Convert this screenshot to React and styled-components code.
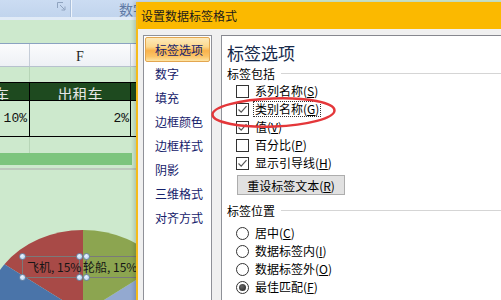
import React from "react";
import styled, { createGlobalStyle } from "styled-components";

const GlobalStyle = createGlobalStyle`
  html, body { margin: 0; padding: 0; }
  body { background: #cde9cd; }
  #root { width: 501px; height: 300px; }
`;

const CJK = `"Noto Sans CJK SC", "Noto Sans", sans-serif`;

const Screen = styled.div`
  position: relative;
  width: 501px;
  height: 300px;
  overflow: hidden;
  background: #cde9cd;
  font-family: ${CJK};
`;

/* ---------- Spreadsheet behind the dialog ---------- */
const Sheet = styled.div`
  display: flex;
  flex-direction: column;
  width: 150px;
  height: 300px;
`;

const Ribbon = styled.div`
  display: flex;
  align-items: flex-start;
  height: 17px;
  padding-left: 57px;
  background: linear-gradient(#cbdcf2, #c1d4ed);
  border-bottom: 3px solid #e1ebf7;
`;

const Launcher = styled.svg`
  flex: none;
  margin-top: 2px;
`;

const RibbonDivider = styled.div`
  flex: none;
  width: 1px;
  height: 17px;
  margin-left: 4px;
  background: #aabfdb;
  border-right: 1px solid #eef4fb;
`;

const RibbonGroup = styled.div`
  margin-left: 47px;
  font-size: 14px;
  line-height: 19px;
  color: #5f7aa5;
  white-space: nowrap;
`;

const Band = styled.div`
  height: 23px;
  background: #cde9cd;
  border-bottom: 1px solid #8ba2c1;
`;

const HeaderRow = styled.div`
  display: grid;
  grid-template-columns: 30px 101px 1fr;
  height: 22px;
  background: linear-gradient(#fbfcfd, #eef1f5);
  border-bottom: 1px solid #b7c1ce;
`;

const HeaderCell = styled.div`
  display: flex;
  align-items: center;
  justify-content: center;
  padding-top: 3px;
  border-right: 1px solid #c5cdd8;
  font-family: "Liberation Serif", serif;
  font-size: 14px;
  color: #1e1e1e;
`;

const GridRow = styled.div`
  display: grid;
  grid-template-columns: 30px 101px 1fr;
  height: ${(p) => p.h}px;
  background: ${(p) => p.bg};
  border-top: ${(p) => (p.ruled ? "1px solid #000" : "none")};
  border-bottom: ${(p) => (p.closed ? "1px solid #000" : "none")};
`;

const GridCell = styled.div`
  display: flex;
  align-items: ${(p) => (p.pt ? "flex-start" : "center")};
  justify-content: ${(p) => p.align || "center"};
  overflow: hidden;
  padding-top: ${(p) => p.pt || 0}px;
  padding-right: ${(p) => p.pr || 0}px;
  border-right: 1px solid ${(p) => p.line};
  color: ${(p) => p.color || "#111"};
  font-family: ${(p) => (p.mono ? `"Liberation Mono", monospace` : CJK)};
  font-size: ${(p) => p.size || 15}px;
  line-height: ${(p) => (p.pt ? "15px" : "normal")};
  white-space: nowrap;
`;

const Clipped = styled.span`
  margin-left: -6px;
`;

const GreenBar = styled.div`
  width: 132px;
  height: 12px;
  background: #7cc57d;
`;

const SheetRule = styled.div`
  height: 2px;
  margin-top: 3px;
  background: #bcc9bc;
`;

const Chart = styled.div`
  position: relative;
  flex: 1;
  background: #cde9cd;
`;

const PieSvg = styled.svg`
  display: block;
`;

const DataLabel = styled.div`
  position: absolute;
  left: ${(p) => p.x}px;
  top: 86px;
  width: ${(p) => p.w}px;
  height: 22px;
  box-sizing: border-box;
  border: 1px solid #7a7a7a;
  font-size: 12px;
  line-height: 19px;
  color: #151515;
  text-indent: ${(p) => p.indent}px;
  white-space: nowrap;
`;

const Handle = styled.div`
  position: absolute;
  left: ${(p) => p.x - 3.5}px;
  top: ${(p) => p.y - 3.5}px;
  width: 7px;
  height: 7px;
  box-sizing: border-box;
  border-radius: 50%;
  border: 1px solid #6b87a8;
  background: radial-gradient(circle at 40% 35%, #eef6ff, #a9c8e8);
`;

/* ---------- Dialog ---------- */
const Dialog = styled.div`
  position: absolute;
  left: 136px;
  top: 2px;
  width: 380px;
  height: 320px;
  display: flex;
  flex-direction: column;
  background: #f0f0f0;
  border-left: 2px solid #f5bb1a;
  box-shadow: -2px 0 4px rgba(0, 0, 0, 0.16);
`;

const TitleBar = styled.div`
  height: 27px;
  line-height: 27px;
  padding-left: 3px;
  background: #fbb900;
  font-size: 12px;
  color: #1b1b1b;
  white-space: nowrap;
`;

const DialogBody = styled.div`
  flex: 1;
  display: flex;
  gap: 9px;
  padding: 6px 0 0 5px;
`;

const Nav = styled.div`
  flex: none;
  width: 69px;
  box-sizing: border-box;
  display: flex;
  flex-direction: column;
  padding-top: 1px;
  background: #fff;
  border: 1px solid #8f9198;
  border-bottom: none;
`;

const NavItem = styled.div`
  height: ${(p) => (p.active ? 25 : 24)}px;
  box-sizing: border-box;
  margin: 0 ${(p) => (p.active ? 1 : 0)}px;
  padding-left: ${(p) => (p.active ? 9 : 11)}px;
  line-height: ${(p) => (p.active ? 23 : 24)}px;
  font-size: 12px;
  color: #15216b;
  white-space: nowrap;
  border: ${(p) => (p.active ? "1px solid #e3a650" : "none")};
  border-radius: 2px;
  background: ${(p) =>
    p.active
      ? "linear-gradient(#fdeabb 0%, #fcd88e 38%, #f9b24c 55%, #fbc467 80%, #fde4a4 100%)"
      : "transparent"};
`;

const Panel = styled.div`
  flex: 1;
  display: flex;
  flex-direction: column;
  padding: 6px 0 0 5px;
  background: #fff;
  border-top: 1px solid #86878f;
  border-left: 1px solid #8f9198;
`;

const PanelTitle = styled.div`
  height: 22px;
  line-height: 22px;
  font-size: 17px;
  color: #16294a;
  white-space: nowrap;
`;

const SectionHead = styled.div`
  display: flex;
  align-items: center;
  height: 18px;
  margin-top: ${(p) => p.mt || 0}px;
  font-size: 12px;
  color: #000;
  white-space: nowrap;
`;

const SectionRule = styled.div`
  flex: 1;
  height: 1px;
  margin-left: 6px;
  background: #d5d5d5;
`;

const OptionList = styled.div`
  display: flex;
  flex-direction: column;
  margin-top: ${(p) => p.mt || 0}px;
`;

const OptionRow = styled.div`
  display: flex;
  align-items: center;
  gap: 6px;
  height: 18px;
  padding-left: 9px;
  font-size: 12px;
  color: #000;
  white-space: nowrap;
`;

const Box = styled.div`
  flex: none;
  width: 13px;
  height: 13px;
  box-sizing: border-box;
  border: 1px solid #333;
  background: #fff;
  display: flex;
  align-items: center;
  justify-content: center;
`;

const Radio = styled.div`
  flex: none;
  width: 13px;
  height: 13px;
  box-sizing: border-box;
  border-radius: 50%;
  border: 1px solid #333;
  background: #fff;
  display: flex;
  align-items: center;
  justify-content: center;
  &::after {
    content: "";
    display: ${(p) => (p.checked ? "block" : "none")};
    width: 7px;
    height: 7px;
    border-radius: 50%;
    background: radial-gradient(circle at 40% 35%, #666, #222);
  }
`;

const OptionLabel = styled.span`
  line-height: 14px;
  padding: 1px 2px;
  margin-left: -2px;
  outline: ${(p) => (p.focused ? "1px dotted #333" : "none")};
  outline-offset: -1px;
`;

const ResetButton = styled.div`
  width: 108px;
  height: 20px;
  box-sizing: border-box;
  margin: 3px 0 0 10px;
  display: flex;
  align-items: center;
  justify-content: center;
  background: #e1e1e1;
  border: 1px solid #adadad;
  font-size: 12px;
  color: #000;
  white-space: nowrap;
`;

const Annotation = styled.svg`
  position: absolute;
  left: 205px;
  top: 90px;
  pointer-events: none;
`;

/* ---------- Data ---------- */
const navItems = ["标签选项", "数字", "填充", "边框颜色", "边框样式", "阴影", "三维格式", "对齐方式"];

const checks = [
  { text: "系列名称", key: "S", checked: false },
  { text: "类别名称", key: "G", checked: true, focused: true },
  { text: "值", key: "V", checked: true },
  { text: "百分比", key: "P", checked: false },
  { text: "显示引导线", key: "H", checked: true },
];

const radios = [
  { text: "居中", key: "C", checked: false },
  { text: "数据标签内", key: "I", checked: false },
  { text: "数据标签外", key: "O", checked: false },
  { text: "最佳匹配", key: "F", checked: true },
];

const Check = () => (
  <svg width="11" height="11" viewBox="0 0 11 11">
    <polyline points="1.5,5.5 4.2,8.2 9.5,2.2" fill="none" stroke="#555" strokeWidth="1.2" />
  </svg>
);

export default function App() {
  return (
    <Screen>
      <GlobalStyle />
      <Sheet>
        <Ribbon>
          <Launcher width="9" height="9" viewBox="0 0 9 9">
            <path d="M0.5 6V0.5H6" fill="none" stroke="#8fa3bf" strokeWidth="1" />
            <path d="M3 3L7.5 7.5M8 4.5V8H4.5" fill="none" stroke="#8fa3bf" strokeWidth="1" />
          </Launcher>
          <RibbonDivider />
          <RibbonGroup>数字</RibbonGroup>
        </Ribbon>
        <Band />
        <HeaderRow>
          <HeaderCell />
          <HeaderCell>F</HeaderCell>
          <HeaderCell />
        </HeaderRow>
        <GridRow h={15} bg="#cde9cd">
          <GridCell line="#b7d5b7" />
          <GridCell line="#b7d5b7" />
          <GridCell line="#b7d5b7" />
        </GridRow>
        <GridRow h={17} bg="#1e4a1f" ruled>
          <GridCell line="#000" align="flex-start" color="#e6e6e6" pt={3}>
            <Clipped>车</Clipped>
          </GridCell>
          <GridCell line="#000" color="#e6e6e6" pt={3}>出租车</GridCell>
          <GridCell line="#000" />
        </GridRow>
        <GridRow h={35} bg="#cde9cd" ruled closed>
          <GridCell line="#000" align="flex-end" pr={2} mono size={13}>10%</GridCell>
          <GridCell line="#000" align="flex-end" pr={1} mono size={13}>2%</GridCell>
          <GridCell line="#000" />
        </GridRow>
        <GridRow h={16} bg="#cde9cd">
          <GridCell line="#b7d5b7" />
          <GridCell line="#cde9cd" />
          <GridCell line="#cde9cd" />
        </GridRow>
        <GreenBar />
        <SheetRule />
        <Chart>
          <PieSvg width="136" height="130" viewBox="0 0 136 130">
            <g transform="translate(83 143) scale(1.17 1)">
              <path d="M0 0L0 -83A83 83 0 0 0 -67.15 -48.79Z" fill="#a84a47" />
              <path d="M0 0L-67.15 -48.79A83 83 0 0 0 0 83Z" fill="#4a74a9" />
              <path d="M0 0L0 83A83 83 0 0 0 67.15 -48.79Z" fill="#93a9d0" />
              <path d="M0 0L67.15 -48.79A83 83 0 0 0 0 -83Z" fill="#8ca550" />
            </g>
          </PieSvg>
          <DataLabel x={22} w={58} indent={4}>飞机, 15%</DataLabel>
          <DataLabel x={86} w={70} indent={-4}>轮船, 15%</DataLabel>
          <Handle x={22} y={86} />
          <Handle x={79} y={86} />
          <Handle x={22} y={107} />
          <Handle x={79} y={107} />
          <Handle x={86} y={86} />
          <Handle x={86} y={107} />
        </Chart>
      </Sheet>

      <Dialog>
        <TitleBar>设置数据标签格式</TitleBar>
        <DialogBody>
          <Nav>
            {navItems.map((t, i) => (
              <NavItem key={t} active={i === 0}>{t}</NavItem>
            ))}
          </Nav>
          <Panel>
            <PanelTitle>标签选项</PanelTitle>
            <SectionHead>
              标签包括
              <SectionRule />
            </SectionHead>
            <OptionList>
              {checks.map((c) => (
                <OptionRow key={c.key}>
                  <Box>{c.checked && <Check />}</Box>
                  <OptionLabel focused={c.focused}>
                    {c.text}(<u>{c.key}</u>)
                  </OptionLabel>
                </OptionRow>
              ))}
            </OptionList>
            <ResetButton>
              重设标签文本(<u>R</u>)
            </ResetButton>
            <SectionHead mt={6}>
              标签位置
              <SectionRule />
            </SectionHead>
            <OptionList mt={5}>
              {radios.map((r) => (
                <OptionRow key={r.key}>
                  <Radio checked={r.checked} />
                  <OptionLabel>
                    {r.text}(<u>{r.key}</u>)
                  </OptionLabel>
                </OptionRow>
              ))}
            </OptionList>
          </Panel>
        </DialogBody>
      </Dialog>

      <Annotation width="140" height="45" viewBox="0 0 140 45">
        <ellipse cx="68.5" cy="22.5" rx="61" ry="14" fill="none" stroke="#e4373a" strokeWidth="2.5" transform="rotate(-2 68.5 22.5)" />
      </Annotation>
    </Screen>
  );
}
